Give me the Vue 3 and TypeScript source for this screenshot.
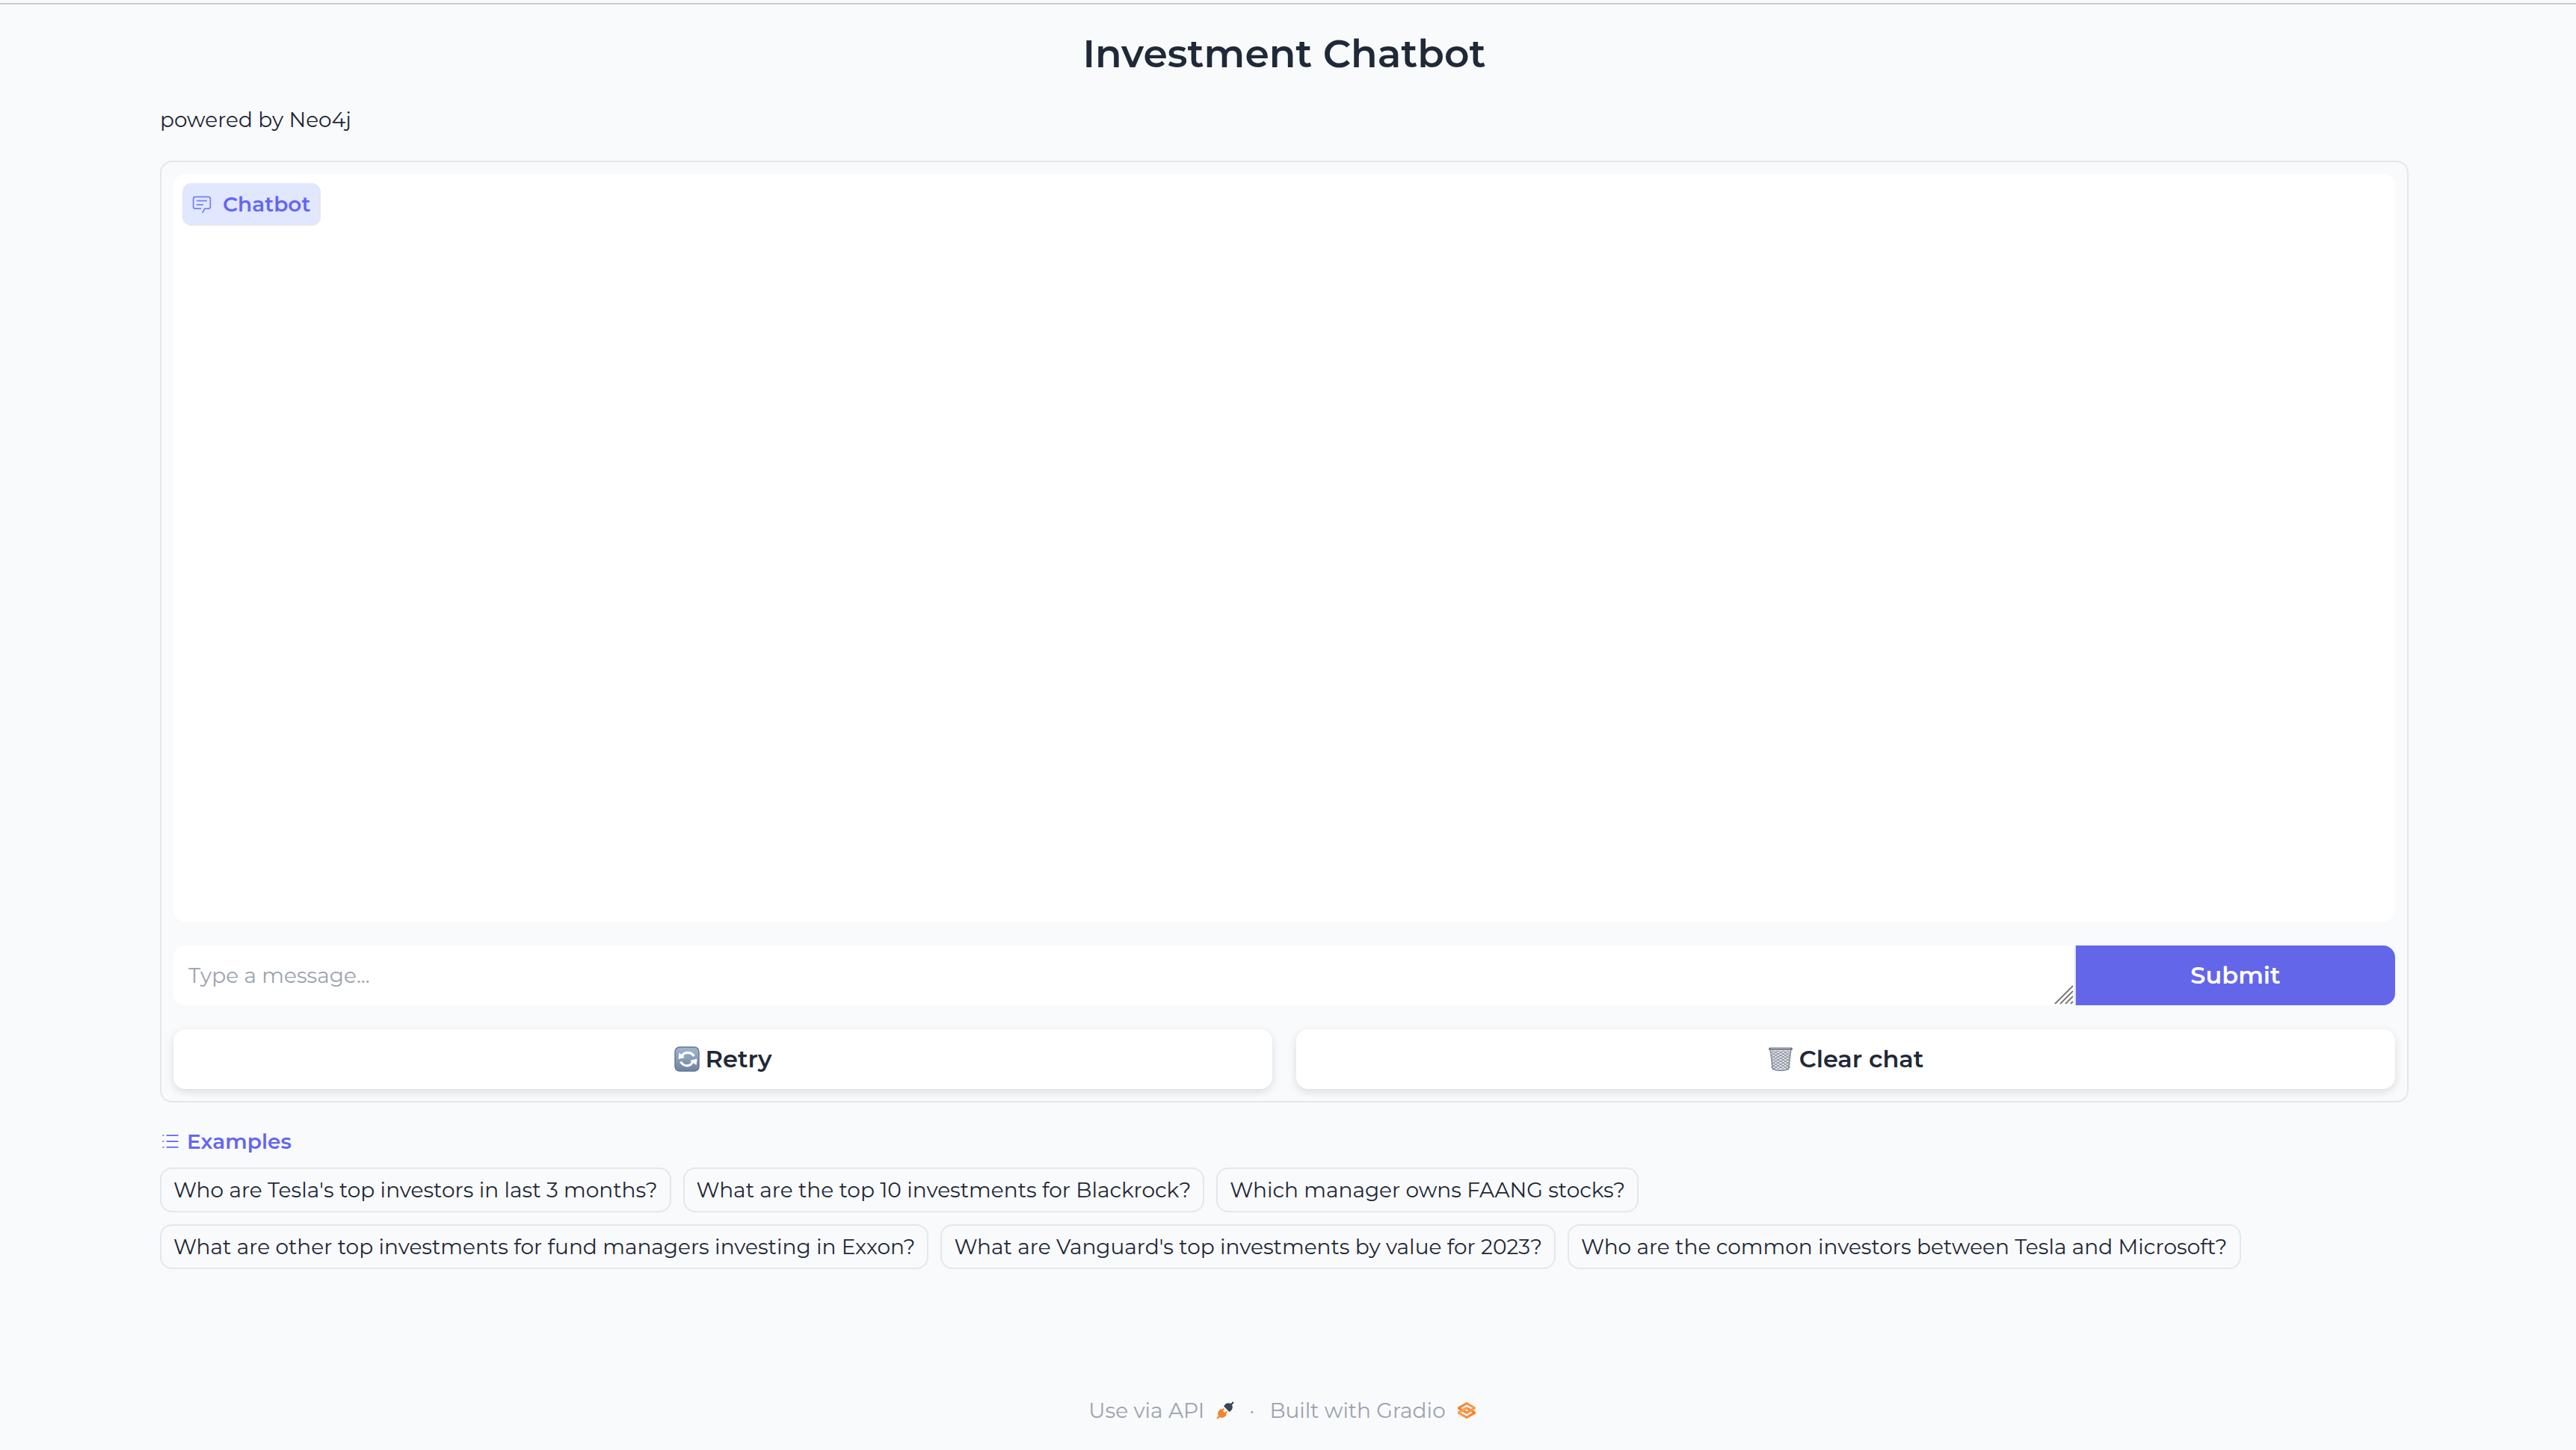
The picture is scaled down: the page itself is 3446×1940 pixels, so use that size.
<script setup lang="ts">
import { ref } from 'vue'

const message = ref('')

const examples: string[] = [
  "Who are Tesla's top investors in last 3 months?",
  'What are the top 10 investments for Blackrock?',
  'Which manager owns FAANG stocks?',
  'What are other top investments for fund managers investing in Exxon?',
  "What are Vanguard's top investments by value for 2023?",
  'Who are the common investors between Tesla and Microsoft?',
]

// Offsets of the woven rows in the waste basket
const weave: number[] = [8, 12, 16, 20, 24, 28]
</script>

<template>
  <div class="page">
    <main class="container">
      <h1 class="title">Investment Chatbot</h1>
      <p class="subtitle">powered by Neo4j</p>

      <section class="panel">
        <div class="chat">
          <div class="chat-label">
            <svg class="icon faded" viewBox="0 0 32 32" fill="currentColor" aria-hidden="true">
              <path d="M17.74 30L16 29l4-7h6a2 2 0 0 0 2-2V8a2 2 0 0 0-2-2H6a2 2 0 0 0-2 2v12a2 2 0 0 0 2 2h9v2H6a4 4 0 0 1-4-4V8a4 4 0 0 1 4-4h20a4 4 0 0 1 4 4v12a4 4 0 0 1-4 4h-4.84Z" />
              <path d="M8 10h16v2H8zm0 6h10v2H8z" />
            </svg>
            <span>Chatbot</span>
          </div>
        </div>

        <form class="composer" @submit.prevent="message = ''">
          <div class="field">
            <textarea v-model="message" rows="1" placeholder="Type a message..." aria-label="Message"></textarea>
            <svg class="grip" viewBox="0 0 26 26" aria-hidden="true">
              <path d="M1 25L25 1M8 25L25 8M15 25L25 15M22 25L25 22" stroke="#777" stroke-width="1.8" />
            </svg>
          </div>
          <button class="submit" type="submit">Submit</button>
        </form>

        <div class="actions">
          <button class="action" type="button">
            <svg class="emoji" viewBox="0 0 34 34" aria-hidden="true">
              <defs>
                <linearGradient id="retry-face" x1="0" y1="0" x2="0" y2="1">
                  <stop offset="0" stop-color="#a3b6cf" />
                  <stop offset="1" stop-color="#6b83a1" />
                </linearGradient>
              </defs>
              <rect x="1" y="1" width="32" height="32" rx="6" fill="url(#retry-face)" stroke="#5f7694" stroke-width="1.4" />
              <path d="M10 13C13 7 22 6.500 26.500 13" fill="none" stroke="#fff" stroke-width="3.200" />
              <path d="M6.500 8.500L5.500 17l8.500-2z" fill="#fff" />
              <path d="M24.500 21C21 27.500 13 27.500 8.500 20.500" fill="none" stroke="#fff" stroke-width="3.200" />
              <path d="M30.500 16.500l-1 8.500-8.500-6z" fill="#fff" />
            </svg>
            <span>Retry</span>
          </button>
          <button class="action" type="button">
            <svg class="emoji" viewBox="0 0 34 34" aria-hidden="true">
              <path d="M2.500 3.500L6 30Q17 35 28 30L31.500 3.500z" fill="#e4e6ea" />
              <g fill="none" stroke="#858c98" stroke-width="1">
                <path
                  v-for="y in weave"
                  :key="y"
                  :d="`M4 ${y}l3-2 3 2 3-2 4 2 4-2 3 2 3-2 3 2M5 ${y}l3 2 3-2 3 2 3-2 3 2 3-2 3 2 3-2`"
                />
                <path d="M3 4L6.500 30M31 4L27.500 30" stroke-width="1.400" />
              </g>
              <path d="M6 29.500Q17 33.500 28 29.500V31Q17 35 6 31z" fill="#6f7f9b" />
              <rect x="1" y="1.500" width="32" height="3.500" rx="1.700" fill="#737984" />
              <path d="M4 3h26" stroke="#b3b7bf" stroke-width="1" />
            </svg>
            <span>Clear chat</span>
          </button>
        </div>
      </section>

      <section class="examples">
        <h2 class="examples-label">
          <svg class="icon" viewBox="0 0 32 32" fill="currentColor" aria-hidden="true">
            <path d="M10 6h18v2H10zm0 18h18v2H10zm0-9h18v2H10zm-6 0h2v2H4zm0-9h2v2H4zm0 18h2v2H4z" />
          </svg>
          <span>Examples</span>
        </h2>
        <div class="chips">
          <button v-for="example in examples" :key="example" class="chip" type="button" @click="message = example">
            {{ example }}
          </button>
        </div>
      </section>

      <footer class="footer">
        <a href="#api">
          <span>Use via API</span>
          <svg viewBox="0 0 28 28" aria-hidden="true">
            <path fill="#3c4555" d="M26.9425 2.94265C27.4632 2.42195 27.4632 1.57773 26.9425 1.05703C26.4218 0.536329 25.5776 0.536329 25.0569 1.05703L22.5713 3.54256C21.1213 2.59333 19.5367 2.43378 18.1753 2.64006C16.5495 2.88638 15.1127 3.66838 14.3905 4.39053L12.3905 6.39053C12.1405 6.64058 12 6.97972 12 7.33334C12 7.68697 12.1405 8.0261 12.3905 8.27615L19.7239 15.6095C20.2446 16.1302 21.0888 16.1302 21.6095 15.6095L23.6095 13.6095C24.3316 12.8873 25.1136 11.4505 25.36 9.82475C25.5663 8.46334 25.4066 6.87878 24.4575 5.4287L26.9425 2.94265Z" />
            <path fill="#f5832a" d="M12.276 12.9426C12.7967 12.4219 12.7967 11.5777 12.276 11.057C11.7553 10.5363 10.9111 10.5363 10.3904 11.057L8.66651 12.7809L8.27615 12.3905C8.0261 12.1405 7.68697 12 7.33334 12C6.97972 12 6.64058 12.1405 6.39053 12.3905L4.39053 14.3905C3.66838 15.1127 2.88638 16.5495 2.64006 18.1753C2.43377 19.5367 2.59333 21.1211 3.54262 22.5713L1.05708 25.0569C0.536379 25.5776 0.536379 26.4218 1.05708 26.9425C1.57778 27.4632 2.422 27.4632 2.9427 26.9425L5.42822 24.4569C6.87862 25.4062 8.46282 25.5658 9.82437 25.3595C11.4501 25.1131 12.8869 24.3311 13.6091 23.609L15.6091 21.609C15.8591 21.359 16 21.0198 16 20.6662C16 20.3126 15.8591 19.9735 15.6091 19.7234L15.2188 19.3331L16.9427 17.6092C17.4634 17.0885 17.4634 16.2443 16.9427 15.7236C16.422 15.2029 15.5778 15.2029 15.0571 15.7236L13.3332 17.4475L10.5521 14.6665L12.276 12.9426Z" />
          </svg>
        </a>
        <span class="dot">·</span>
        <a href="#gradio">
          <span>Built with Gradio</span>
          <svg viewBox="68 68 439 439" fill="none" stroke-width="59" aria-hidden="true">
            <defs>
              <linearGradient id="weave-low" x1="60" y1="341" x2="429.500" y2="344" gradientUnits="userSpaceOnUse">
                <stop stop-color="#f9a356" />
                <stop offset="1" stop-color="#f5832a" />
              </linearGradient>
              <linearGradient id="weave-high" x1="513.500" y1="231" x2="143.500" y2="231" gradientUnits="userSpaceOnUse">
                <stop stop-color="#f9a356" />
                <stop offset="1" stop-color="#f5832a" />
              </linearGradient>
            </defs>
            <path d="M287.500 229L86 344.500L287.500 460L489 344.500L287.500 229Z" stroke="url(#weave-low)" />
            <path d="M287.500 116L86 231.500L287.500 347L489 231.500L287.500 116Z" stroke="url(#weave-high)" />
            <path d="M86 344L288 229" stroke="#f9a356" />
          </svg>
        </a>
      </footer>
    </main>
  </div>
</template>

<style>
body {
  margin: 0;
  background: #f9fafc;
}
</style>

<style scoped>
.page {
  box-sizing: border-box;
  border-top: 2px solid #c9cacf;
  margin-top: 4px;
  padding-right: 10px;
  color: #1f2937;
  font-family: "Montserrat", "Inter", sans-serif;
  font-size: 28px;
  line-height: 42px;
}

.container {
  box-sizing: border-box;
  max-width: 3072px;
  margin: 0 auto;
  padding: 32px;
}

button,
textarea {
  font: inherit;
  color: inherit;
  margin: 0;
  border: 0;
}

button {
  cursor: pointer;
}

.title {
  margin: 0;
  font-size: 52px;
  font-weight: 600;
  line-height: 68px;
  text-align: center;
}

.subtitle {
  margin: 33px 0 34px;
}

.panel {
  display: flex;
  flex-direction: column;
  gap: 32px;
  padding: 16px;
  border: 2px solid #e5e7eb;
  border-radius: 16px;
}

.chat {
  height: 1000px;
  border-radius: 16px;
  background: #fff;
  display: flex;
  align-items: flex-start;
}

.chat-label {
  display: flex;
  align-items: center;
  gap: 14px;
  box-sizing: border-box;
  height: 57px;
  margin: 12px;
  padding: 0 12px;
  border: 0 solid #e5e7eb;
  border-width: 0 2px 2px 0;
  border-radius: 12px;
  background: #e0e7ff;
  color: #6366f1;
  font-weight: 600;
}

.icon {
  width: 28px;
  height: 28px;
  flex: none;
}

.faded {
  opacity: 0.8;
}

.composer {
  display: flex;
  height: 80px;
}

.field {
  position: relative;
  display: flex;
  flex: 1;
  border-right: 2px solid #e0e3e8;
}

textarea {
  flex: 1;
  box-sizing: border-box;
  padding: 19px 20px;
  border-radius: 16px 0 0 16px;
  background: #fff;
  outline: none;
  resize: none;
  overflow: hidden;
}

textarea::placeholder {
  color: #9ca3af;
  opacity: 1;
}

.grip {
  position: absolute;
  right: 1px;
  bottom: 1px;
  width: 26px;
  height: 26px;
}

.submit {
  width: 427px;
  border-radius: 0 16px 16px 0;
  background: #6366e9;
  color: #fff;
  font-size: 32px;
  font-weight: 600;
}

.actions {
  display: flex;
  gap: 32px;
}

.action {
  display: flex;
  align-items: center;
  justify-content: center;
  gap: 8px;
  flex: 1;
  height: 80px;
  border-radius: 16px;
  background: #fff;
  box-shadow: 0 4px 12px rgba(0, 0, 0, 0.12);
  font-size: 32px;
  font-weight: 600;
}

.emoji {
  width: 34px;
  height: 34px;
}

.examples {
  margin-top: 31px;
}

.examples-label {
  display: flex;
  align-items: center;
  gap: 8px;
  margin: 0 0 14px;
  color: #6366f1;
  font-size: 28px;
  font-weight: 600;
}

.chips {
  display: flex;
  flex-wrap: wrap;
  gap: 16px;
}

.chip {
  box-sizing: border-box;
  height: 60px;
  padding: 0 16px;
  border: 2px solid #e5e7eb;
  border-radius: 16px;
  background: transparent;
}

.footer {
  display: flex;
  align-items: center;
  justify-content: center;
  gap: 20px;
  margin-top: 168px;
  padding-right: 6px;
  color: #9ca3af;
}

.footer a {
  display: flex;
  align-items: center;
  gap: 16px;
  color: inherit;
  text-decoration: none;
}

.footer svg {
  width: 24px;
  height: 24px;
}
</style>
